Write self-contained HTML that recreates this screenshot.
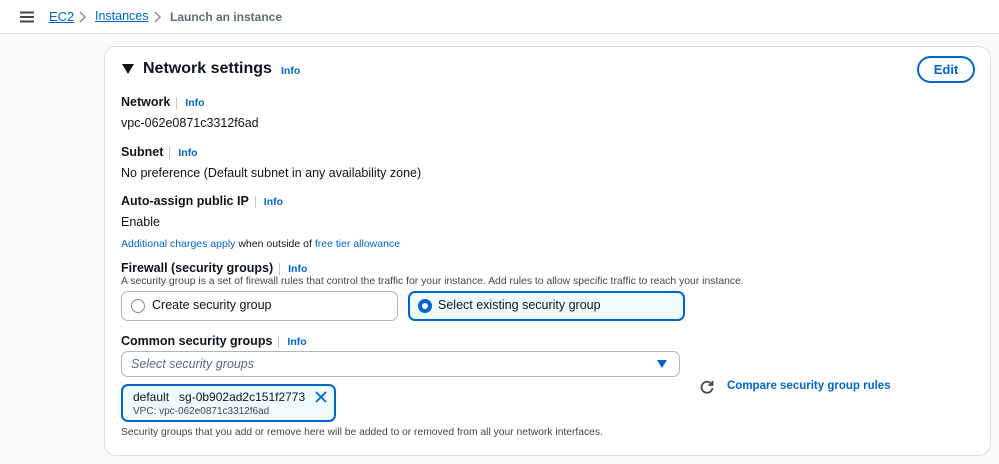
<!DOCTYPE html>
<html><head><style>
*{box-sizing:border-box;margin:0;padding:0}
body{width:999px;height:464px;background:#fafafa;font-family:"Liberation Sans",sans-serif;color:#0f141a;position:relative;overflow:hidden}
.a{position:absolute;white-space:nowrap}
.hdr{position:absolute;left:0;top:0;width:999px;height:34px;background:#fff;border-bottom:1px solid #e4e4e4}
.card{position:absolute;left:104px;top:46px;width:887px;height:410px;background:#fff;border:1px solid #dedee2;border-radius:12px}
.lbl{font-size:12.5px;font-weight:bold}
.info{font-size:10.5px;font-weight:bold;color:#0066cc;padding-left:8px;border-left:1px solid #c6c6cd;margin-left:6px}
.val{font-size:12.5px}
.link{color:#0066cc}
</style></head><body>
<div class="hdr">
<svg class="a" style="left:20px;top:11px" width="14" height="12"><path d="M0 1.5H14M0 6H14M0 10.5H14" stroke="#424650" stroke-width="2"/></svg>
<div class="a" style="left:49px;top:9px;font-size:13px;color:#0066cc;text-decoration:underline">EC2</div>
<svg class="a" style="left:78px;top:11px" width="8" height="12"><path d="M2 1l5 5-5 5" fill="none" stroke="#8c8c94" stroke-width="1.5"/></svg>
<div class="a" style="left:95px;top:9px;font-size:12.5px;color:#0066cc;text-decoration:underline">Instances</div>
<svg class="a" style="left:153px;top:11px" width="8" height="12"><path d="M2 1l5 5-5 5" fill="none" stroke="#8c8c94" stroke-width="1.5"/></svg>
<div class="a" style="left:170px;top:10px;font-size:12px;color:#5f6b7a;font-weight:bold">Launch an instance</div>
</div>
<div class="card"></div>
<svg class="a" style="left:122px;top:64px" width="12" height="10"><path d="M0 0H12L6 10Z" fill="#0f141a"/></svg>
<div class="a" style="left:143px;top:60px;font-size:16px;font-weight:bold">Network settings</div>
<div class="a" style="left:281px;top:65px;font-size:10.5px;font-weight:bold;color:#0066cc">Info</div>
<div class="a" style="left:917px;top:56px;width:58px;height:27px;border:2px solid #0066cc;border-radius:14px;color:#0066cc;font-weight:bold;font-size:13px;text-align:center;line-height:23px">Edit</div>

<div class="a" style="left:121px;top:93px"><span class="lbl">Network</span><span class="info">Info</span></div>
<div class="a val" style="left:121px;top:116px">vpc-062e0871c3312f6ad</div>
<div class="a" style="left:121px;top:143px"><span class="lbl">Subnet</span><span class="info">Info</span></div>
<div class="a val" style="left:121px;top:166px">No preference (Default subnet in any availability zone)</div>
<div class="a" style="left:121px;top:192px"><span class="lbl">Auto-assign public IP</span><span class="info">Info</span></div>
<div class="a val" style="left:121px;top:215px">Enable</div>
<div class="a" style="left:121px;top:238px;font-size:10.5px"><span class="link">Additional charges apply</span> when outside of <span class="link">free tier allowance</span></div>
<div class="a" style="left:121px;top:259px"><span class="lbl">Firewall (security groups)</span><span class="info">Info</span></div>
<div class="a" style="left:121px;top:276px;font-size:10.4px;color:#424650">A security group is a set of firewall rules that control the traffic for your instance. Add rules to allow specific traffic to reach your instance.</div>

<div class="a" style="left:121px;top:291px;width:277px;height:30px;border:1px solid #b4b4bb;border-radius:7px"></div>
<div class="a" style="left:131px;top:299px;width:14px;height:14px;border:1.5px solid #8c8c94;border-radius:50%"></div>
<div class="a val" style="left:152px;top:298px">Create security group</div>
<div class="a" style="left:408px;top:291px;width:277px;height:30px;border:2px solid #0066cc;border-radius:7px;background:#f0fbff"></div>
<div class="a" style="left:418px;top:299px;width:14px;height:14px;border:4px solid #0066cc;border-radius:50%;background:#fff"></div>
<div class="a val" style="left:438px;top:298px">Select existing security group</div>

<div class="a" style="left:121px;top:332px"><span class="lbl">Common security groups</span><span class="info">Info</span></div>
<div class="a" style="left:121px;top:351px;width:559px;height:26px;border:1px solid #b4b4bb;border-radius:7px"></div>
<div class="a" style="left:131px;top:357px;font-size:12.5px;font-style:italic;color:#5f6b7a">Select security groups</div>
<svg class="a" style="left:657px;top:360px" width="10" height="8"><path d="M0 0H10L5 8Z" fill="#0066cc"/></svg>

<div class="a" style="left:121px;top:384px;width:215px;height:38px;border:2px solid #0066cc;border-radius:7px;background:#f0fbff"></div>
<div class="a" style="left:133px;top:390px;font-size:12px">default&nbsp;&nbsp;&nbsp;sg-0b902ad2c151f2773</div>
<svg class="a" style="left:315px;top:391px" width="12" height="12"><path d="M1 1L11 11M11 1L1 11" stroke="#0066cc" stroke-width="1.8"/></svg>
<div class="a" style="left:133px;top:406px;font-size:10px;color:#424650">VPC: vpc-062e0871c3312f6ad</div>
<div class="a" style="left:121px;top:427px;font-size:10.3px;color:#424650">Security groups that you add or remove here will be added to or removed from all your network interfaces.</div>

<svg class="a" style="left:700px;top:380px" width="14" height="14" viewBox="0 0 14 14"><path d="M11.5 4A5.5 5.5 0 1 0 12.5 8" fill="none" stroke="#424650" stroke-width="1.8"/><path d="M12.5 1V5H8.5" fill="none" stroke="#424650" stroke-width="1.8"/></svg>
<div class="a" style="left:727px;top:380px;font-size:11.5px;font-weight:bold;color:#0066cc">Compare security group rules</div>
</body></html>
